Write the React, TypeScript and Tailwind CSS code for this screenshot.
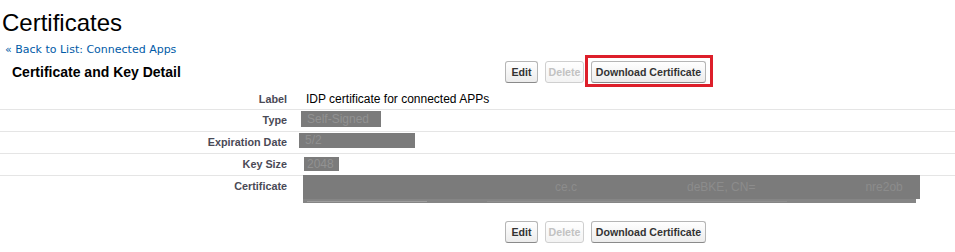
import React from "react";

function Btn({ w, children, disabled }: { w: string; children: React.ReactNode; disabled?: boolean }) {
  return (
    <div
      className={
        "h-[22px] flex items-center justify-center rounded-[3px] border text-[10.6px] font-bold leading-none " +
        w +
        (disabled
          ? " border-[#cfcfcf] text-[#c2c2c2] bg-gradient-to-b from-white to-[#f3f3f3]"
          : " border-[#b5b5b5] border-b-[#8a8a8a] text-[#333] bg-gradient-to-b from-white to-[#ececec]")
      }
    >
      {children}
    </div>
  );
}

function Buttons() {
  return (
    <div className="flex gap-[7px]">
      <Btn w="w-[33px]">Edit</Btn>
      <Btn w="w-[39px]" disabled>
        Delete
      </Btn>
      <Btn w="w-[115px]">Download Certificate</Btn>
    </div>
  );
}

function Label({ children }: { children: React.ReactNode }) {
  return (
    <div className="w-[287px] shrink-0 text-right pt-[3px] text-[10.8px] leading-[14px] font-bold text-[#4a4a56]">
      {children}
    </div>
  );
}

export default function App() {
  return (
    <div className="w-[955px] h-[252px] bg-white relative overflow-hidden font-['Liberation_Sans',Arial,sans-serif] text-black">
      <h1 className="pt-[11px] pl-[2px] text-[24px] leading-[24px] font-normal">Certificates</h1>
      <a className="block mt-[8px] pl-[5px] text-[11px] leading-[13px] font-['DejaVu_Sans',Verdana,sans-serif] text-[#015ba7]">
        « Back to List: Connected Apps
      </a>
      <div className="mt-[5px] flex items-center h-[22px]">
        <div className="w-[505px] pl-[12px] text-[14px] font-bold leading-[22px]">Certificate and Key Detail</div>
        <Buttons />
      </div>
      <div className="absolute left-[585px] top-[55px] w-[128px] h-[32px] border-[3px] border-[#dd1f2a]" />

      <div className="mt-[6px]">
        <div className="flex h-[21px] border-b border-[#e5e5e5]">
          <Label>Label</Label>
          <div className="pl-[19px] pt-[3px] text-[12px] leading-[14px]">IDP certificate for connected APPs</div>
        </div>
        <div className="flex h-[22px] border-b border-[#e5e5e5]">
          <Label>Type</Label>
          <div className="ml-[14px] mt-[1px] w-[80px] h-[16px] bg-[#7b7b7b] text-[12px] leading-[16px] pl-[6px] text-[#929292]">
            Self-Signed
          </div>
        </div>
        <div className="flex h-[22px] border-b border-[#e5e5e5]">
          <Label>Expiration Date</Label>
          <div className="ml-[12px] mt-[1px] w-[116px] h-[15px] bg-[#7b7b7b] text-[12px] leading-[15px] pl-[6px] text-[#909090]">
            5/2
          </div>
        </div>
        <div className="flex h-[22px] border-b border-[#e5e5e5]">
          <Label>Key Size</Label>
          <div className="ml-[17px] mt-[3px] w-[35px] h-[14px] bg-[#7b7b7b] text-[12px] leading-[14px] pl-[3px] text-[#929292]">
            2048
          </div>
        </div>
        <div className="flex h-[45px]">
          <Label>Certificate</Label>
          <div className="ml-[16px] -mt-[1px] w-[617px]">
            <div className="h-[24px] w-[617px] bg-[#7b7b7b] text-[12px] leading-[24px] text-[#8c8c8c] flex whitespace-nowrap">
              <span className="ml-[252px]">ce.c</span>
              <span className="ml-[110px]">deBKE, CN=</span>
              <span className="ml-[110px]">nre2ob</span>
            </div>
            <div className="h-[4px] w-[613px] bg-[#858585] flex items-center">
              <div className="ml-[4px] w-[120px] h-[1px] bg-[#9e9e9e]" />
              <div className="ml-[60px] w-[300px] h-[1px] bg-[#8f8f8f]" />
            </div>
          </div>
        </div>
        <div className="flex">
          <div className="w-[505px]" />
          <Buttons />
        </div>
      </div>
    </div>
  );
}
